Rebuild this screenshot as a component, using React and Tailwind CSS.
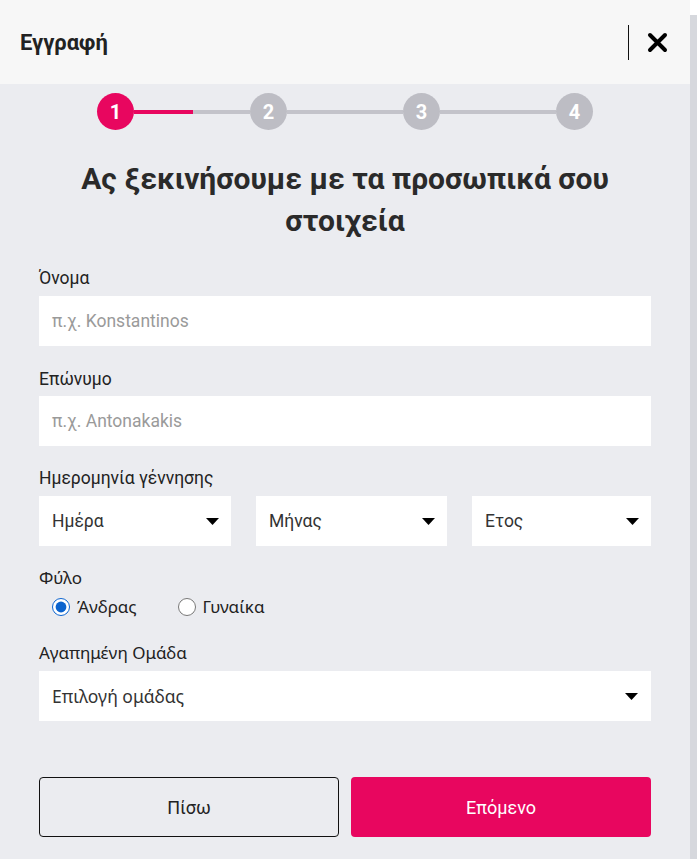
import React from "react";

const roboto = { fontFamily: "Roboto, 'Noto Sans', sans-serif" };
const noto = { fontFamily: "'Noto Sans', sans-serif" };

function Caret() {
  return (
    <svg width="13" height="7" viewBox="0 0 13 7" className="shrink-0">
      <path d="M0 0 L13 0 L6.5 7 Z" fill="#000" />
    </svg>
  );
}

function SelectBox({ label, className = "", font }) {
  return (
    <div className={`h-[50px] bg-white flex items-center justify-between pl-[13px] pr-[12px] ${className}`}>
      <span className="text-[17.5px] text-[#333]" style={font}>{label}</span>
      <Caret />
    </div>
  );
}

function Step({ n, active }) {
  return (
    <div
      className={`w-[37px] h-[37px] rounded-full flex items-center justify-center text-white text-[20px] font-bold shrink-0 ${active ? "bg-[#e8065f]" : "bg-[#bdbdc4]"}`}
    >
      {n}
    </div>
  );
}

export default function App() {
  return (
    <div className="w-[697px] h-[859px] flex bg-[#ebecf0] text-[#222]" style={roboto}>
      <div className="w-[690px] flex flex-col">
        <div className="h-[84px] bg-[#f7f7f7] flex items-center pl-[20px] pr-[22px]">
          <div className="text-[22px] font-bold text-[#222]">Εγγραφή</div>
          <div className="ml-auto w-px h-[35px] bg-[#111]" />
          <svg width="21" height="21" viewBox="0 0 21 21" className="ml-[18px]">
            <path d="M3 3 L18 18 M18 3 L3 18" stroke="#000" strokeWidth="4" strokeLinecap="round" />
          </svg>
        </div>

        <div className="flex items-center justify-center pt-[9px]">
          <Step n="1" active />
          <div className="w-[116px] h-[4px] flex">
            <div className="w-[59px] bg-[#e8065f]" />
            <div className="flex-1 bg-[#c3c3ca]" />
          </div>
          <Step n="2" />
          <div className="w-[116px] h-[4px] bg-[#c3c3ca]" />
          <Step n="3" />
          <div className="w-[116px] h-[4px] bg-[#c3c3ca]" />
          <Step n="4" />
        </div>

        <h1 className="mt-[28px] text-center text-[30px] font-bold leading-[42px] text-[#2a2a2a] px-[70px]">
          Ας ξεκινήσουμε με τα προσωπικά σου στοιχεία
        </h1>

        <div className="px-[39px] mt-[26px] flex flex-col">
          <label className="text-[17.5px] leading-[20px] text-[#222]">Όνομα</label>
          <div className="mt-[8px] h-[50px] bg-white flex items-center pl-[13px] text-[17.5px] text-[#9a9a9a]">
            π.χ. Konstantinos
          </div>

          <label className="mt-[23px] text-[17.5px] leading-[20px] text-[#222]">Επώνυμο</label>
          <div className="mt-[7px] h-[50px] bg-white flex items-center pl-[13px] text-[17.5px] text-[#9a9a9a]">
            π.χ. Antonakakis
          </div>

          <label className="mt-[22px] text-[17.5px] leading-[20px] text-[#222]">Ημερομηνία γέννησης</label>
          <div className="mt-[8px] flex gap-[25px]">
            <SelectBox label="Ημέρα" className="w-[192px]" />
            <SelectBox label="Μήνας" className="w-[191px]" />
            <SelectBox label="Ετος" className="flex-1" />
          </div>

          <div style={noto} className="flex flex-col">
            <label className="mt-[22px] text-[17px] leading-[20px] text-[#222]">Φύλο</label>
            <div className="mt-[8px] flex items-center pl-[13px] h-[22px]">
              <label className="flex items-center gap-[7px] text-[17px] text-[#222]">
                <input type="radio" name="g" defaultChecked className="m-0 w-[18px] h-[18px] accent-[#0b63ce]" />
                Άνδρας
              </label>
              <label className="ml-[41px] flex items-center gap-[7px] text-[17px] text-[#222]">
                <input type="radio" name="g" className="m-0 w-[18px] h-[18px] accent-[#0b63ce]" />
                Γυναίκα
              </label>
            </div>
            <label className="mt-[25px] text-[17px] leading-[20px] text-[#222]">Αγαπημένη Ομάδα</label>
            <div className="mt-[8px]">
              <SelectBox label="Επιλογή ομάδας" className="w-full pr-[13px]" font={noto} />
            </div>
          </div>

          <div className="mt-[56px] flex gap-[12px]">
            <button className="w-[300px] h-[60px] border border-[#111] rounded-[4px] bg-transparent text-[18px] text-[#222]">
              Πίσω
            </button>
            <button className="flex-1 h-[60px] rounded-[4px] bg-[#e8065f] text-[18px] text-white">
              Επόμενο
            </button>
          </div>
        </div>
      </div>
      <div className="w-[7px] flex flex-col">
        <div className="h-[15px] bg-white" />
        <div className="flex-1 bg-[#d6d8dd]" />
      </div>
    </div>
  );
}
